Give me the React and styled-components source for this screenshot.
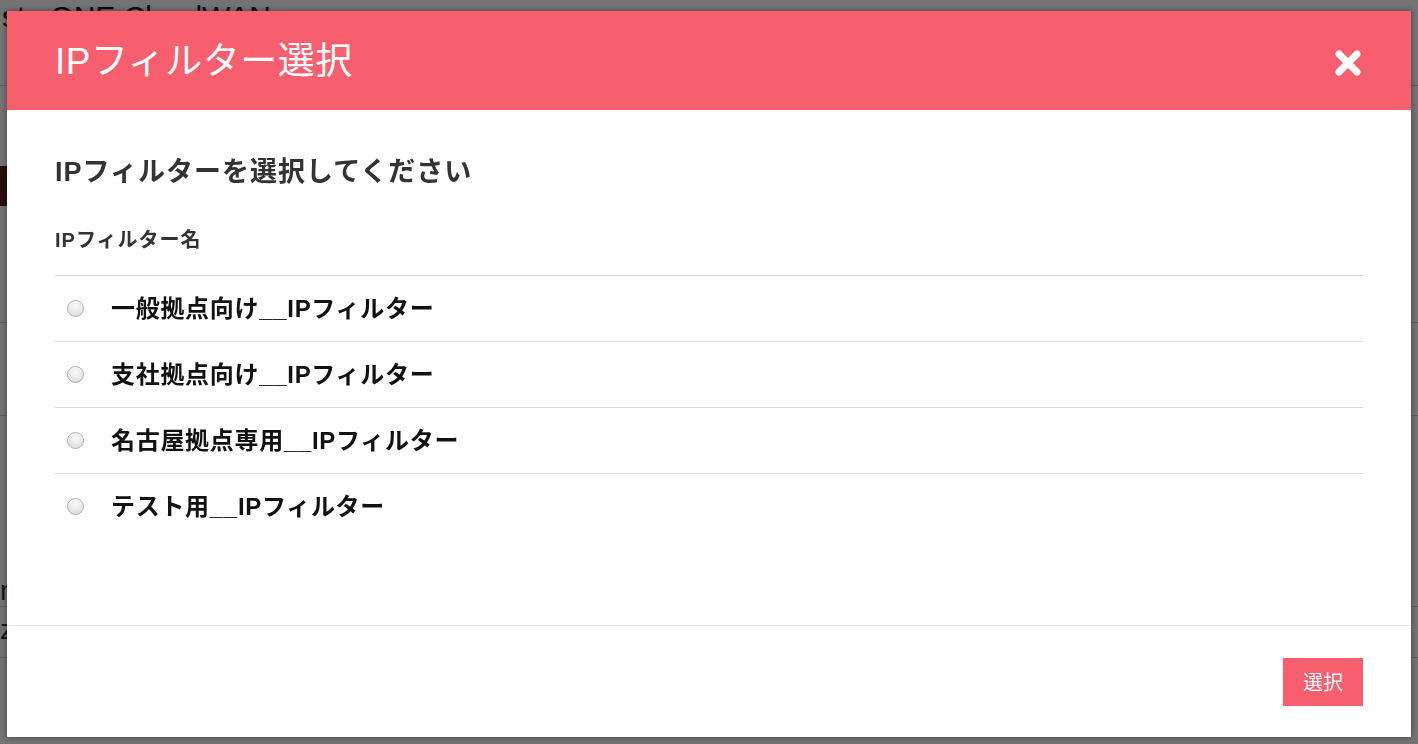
import React, { useState } from "react";
import styled, { createGlobalStyle } from "styled-components";

const GlobalStyle = createGlobalStyle`
  html, body {
    margin: 0;
    padding: 0;
    width: 100%;
    height: 100%;
    overflow: hidden;
  }
  body {
    font-family: "Liberation Sans", "Noto Sans CJK JP", sans-serif;
    background: #fff;
  }
`;

// --- page behind the modal ---

const Page = styled.div`
  width: 1418px;
  height: 744px;
  background: #fff;
  color: #222;
`;

const PageTitle = styled.div`
  font-size: 30px;
  line-height: 34px;
  height: 34px;
  padding-left: 2px;
  color: #111;
  overflow: hidden;
`;

const PageRule = styled.div`
  height: 1px;
  background: #ccc;
  margin-top: ${(p) => p.$gap}px;
`;

const SideMark = styled.div`
  width: 7px;
  height: 40px;
  margin-top: ${(p) => p.$gap}px;
  background: #5a1f12;
`;

const PageText = styled.div`
  font-size: 28px;
  line-height: 30px;
  color: #1d3a55;
  margin-top: ${(p) => p.$gap}px;
  padding-left: ${(p) => p.$indent || 0}px;
`;

const Overlay = styled.div`
  position: fixed;
  inset: 0;
  background: rgba(0, 0, 0, 0.55);
`;

// --- modal ---

const Modal = styled.div`
  position: fixed;
  top: 11px;
  left: 7px;
  width: 1404px;
  height: 726px;
  background: #fff;
  display: flex;
  flex-direction: column;
  box-shadow: 0 0 6px rgba(0, 0, 0, 0.45);
`;

const Header = styled.div`
  height: 99px;
  flex-shrink: 0;
  background: #f75f6f;
  display: flex;
  align-items: center;
  justify-content: space-between;
  padding: 0 48px;
  box-sizing: border-box;
`;

const Title = styled.h1`
  margin: 0;
  margin-top: -6px;
  font-weight: 400;
  font-size: 37px;
  letter-spacing: 0.5px;
  color: #fff;
  font-family: "Liberation Sans", "Noto Sans CJK JP", sans-serif;
`;

const CloseButton = styled.button`
  border: 0;
  background: none;
  padding: 0;
  width: 30px;
  height: 30px;
  margin-right: 0;
  margin-top: 4px;
  cursor: pointer;
  display: flex;
  align-items: center;
  justify-content: center;
`;

const Body = styled.div`
  flex: 1;
  padding: 0 48px;
  display: flex;
  flex-direction: column;
`;

const Heading = styled.h2`
  margin: 44px 0 0;
  font-size: 27px;
  line-height: 36px;
  font-weight: 700;
  color: #333;
  letter-spacing: 1px;
`;

const ColumnLabel = styled.div`
  margin-top: 38px;
  margin-bottom: 23px;
  font-size: 20px;
  line-height: 24px;
  font-weight: 700;
  color: #333;
  letter-spacing: 1px;
`;

const List = styled.div`
  border-top: 1px solid #dcdcdc;
`;

const Row = styled.label`
  height: 65px;
  display: flex;
  align-items: center;
  border-bottom: ${(p) => (p.$last ? "0" : "1px solid #dcdcdc")};
  cursor: pointer;
`;

const Radio = styled.span`
  width: 17px;
  height: 17px;
  flex-shrink: 0;
  border-radius: 50%;
  margin-left: 12px;
  margin-right: 27px;
  box-sizing: border-box;
  border: 1px solid #b0b0b0;
  background: radial-gradient(circle at 50% 35%, #fbfbfb 0%, #e4e4e4 65%, #d2d2d2 100%);
  box-shadow: inset 0 1px 1px rgba(255, 255, 255, 0.8);
  display: flex;
  align-items: center;
  justify-content: center;

  &::after {
    content: "";
    width: 7px;
    height: 7px;
    border-radius: 50%;
    background: ${(p) => (p.$on ? "#444" : "transparent")};
  }
`;

const RowText = styled.span`
  font-size: 24px;
  font-weight: 700;
  color: #111;
  line-height: 30px;
  letter-spacing: 0.7px;
`;

const Footer = styled.div`
  height: 112px;
  flex-shrink: 0;
  border-top: 1px solid #e6e6e6;
  box-sizing: border-box;
  display: flex;
  align-items: center;
  justify-content: flex-end;
  padding: 0 48px 0 0;
`;

const SubmitButton = styled.button`
  width: 80px;
  height: 48px;
  border: 0;
  background: #f75f6f;
  color: #fff;
  font-size: 20px;
  font-family: "Liberation Sans", "Noto Sans CJK JP", sans-serif;
  cursor: pointer;
`;

const filters = [
  "一般拠点向け__IPフィルター",
  "支社拠点向け__IPフィルター",
  "名古屋拠点専用__IPフィルター",
  "テスト用__IPフィルター",
];

const CloseIcon = () => (
  <svg width="28" height="28" viewBox="0 0 28 28">
    <path
      d="M5 5 L23 23 M23 5 L5 23"
      stroke="#fff"
      strokeWidth="7"
      strokeLinecap="round"
    />
  </svg>
);

const App = () => {
  const [selected, setSelected] = useState(null);

  return (
    <>
      <GlobalStyle />
      <Page>
        <PageTitle>st : ONE CloudWAN</PageTitle>
        <PageRule $gap={51} />
        <SideMark $gap={80} />
        <PageRule $gap={116} />
        <PageRule $gap={92} />
        <PageText $gap={160}>n</PageText>
        <PageRule $gap={0} />
        <PageText $gap={8}>z</PageText>
        <PageRule $gap={12} />
        <PageText $gap={36} $indent={35}>IPフィルター :</PageText>
      </Page>
      <Overlay />
      <Modal>
        <Header>
          <Title>IPフィルター選択</Title>
          <CloseButton aria-label="close">
            <CloseIcon />
          </CloseButton>
        </Header>
        <Body>
          <Heading>IPフィルターを選択してください</Heading>
          <ColumnLabel>IPフィルター名</ColumnLabel>
          <List>
            {filters.map((name, i) => (
              <Row
                key={name}
                $last={i === filters.length - 1}
                onClick={() => setSelected(i)}
              >
                <Radio $on={selected === i} />
                <RowText>{name}</RowText>
              </Row>
            ))}
          </List>
        </Body>
        <Footer>
          <SubmitButton>選択</SubmitButton>
        </Footer>
      </Modal>
    </>
  );
};

export default App;
